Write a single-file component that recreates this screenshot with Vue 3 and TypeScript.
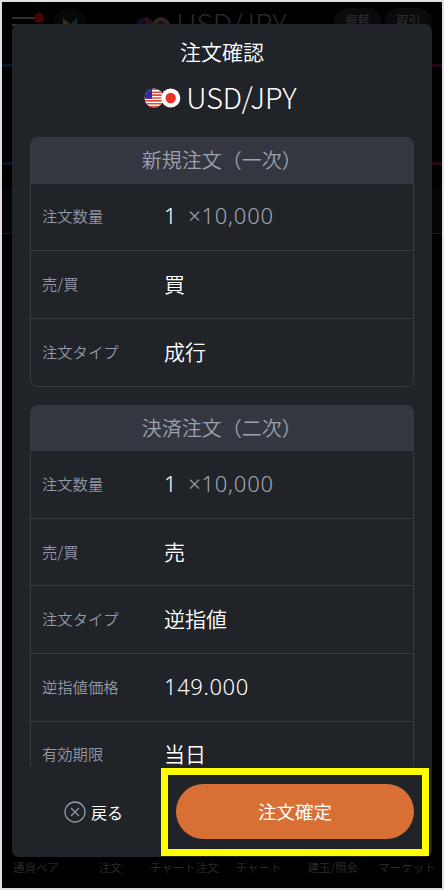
<script setup lang="ts">
interface Row {
  label: string
  value: string
  unit?: string
}
interface Section {
  title: string
  rows: Row[]
}

const sections: Section[] = [
  {
    title: '新規注文（一次）',
    rows: [
      { label: '注文数量', value: '1', unit: '×10,000' },
      { label: '売/買', value: '買' },
      { label: '注文タイプ', value: '成行' },
    ],
  },
  {
    title: '決済注文（二次）',
    rows: [
      { label: '注文数量', value: '1', unit: '×10,000' },
      { label: '売/買', value: '売' },
      { label: '注文タイプ', value: '逆指値' },
      { label: '逆指値価格', value: '149.000' },
      { label: '有効期限', value: '当日' },
    ],
  },
]
const tabs: string[] = ['通貨ペア', '注文', 'チャート注文', 'チャート', '建玉/照会', 'マーケット']
const isNumeric = (v: string): boolean => /^[\d.,]+$/.test(v)
</script>

<template>
  <div class="frame">
    <div class="screen">
      <header class="topbar">
        <div class="menu"><i></i><i></i><b></b></div>
        <div class="mascot">
          <svg width="18" height="18" viewBox="0 0 18 18">
            <path d="M2 1l7 6v9L2 12z" fill="#38330b" />
            <path d="M16 1l-7 6v9l7-5z" fill="#0c2e29" />
          </svg>
        </div>
        <div class="under-pair">
          <svg width="35" height="20" viewBox="0 0 35 20">
            <circle cx="9" cy="12" r="9" fill="#301013" />
            <path d="M0 12a9 9 0 0 1 9-9v9z" fill="#0d0c2b" />
            <circle cx="25" cy="12" r="9" fill="#272727" />
            <circle cx="25" cy="12" r="5" fill="#380909" />
          </svg>
          <span>USD/JPY</span>
        </div>
        <div class="pill">振替</div>
        <div class="pill">取引</div>
      </header>
      <div class="backdrop">
        <div class="rates upper"></div>
        <div class="rates lower"></div>
        <div class="panel"></div>
      </div>
      <nav class="tabs"><span v-for="t in tabs" :key="t">{{ t }}</span></nav>

      <section class="modal">
        <h1>注文確認</h1>
        <div class="pair">
          <svg class="flags" width="37" height="20" viewBox="0 0 37 20">
            <defs><clipPath id="us"><circle cx="10" cy="10" r="9.5" /></clipPath></defs>
            <g clip-path="url(#us)">
              <path fill="#fff" d="M0 0h20v20H0z" />
              <path stroke="#e9493c" stroke-width="1.6" d="M0 1.3h20M0 4.2h20M0 7.1h20M0 10h20M0 12.9h20M0 15.8h20M0 18.7h20" />
              <path fill="#302ba0" d="M0 0h8v10.7H0z" />
            </g>
            <circle cx="26.7" cy="10" r="9.6" fill="#fff" />
            <circle cx="26.7" cy="10" r="5.2" fill="#ec3323" />
          </svg>
          <span>USD/JPY</span>
        </div>
        <div class="scroll">
          <div v-for="s in sections" :key="s.title" class="card">
            <h2>{{ s.title }}</h2>
            <div v-for="r in s.rows" :key="r.label" class="row">
              <span class="label">{{ r.label }}</span>
              <span class="value" :class="{ num: isNumeric(r.value) }">{{ r.value }}</span>
              <span v-if="r.unit" class="unit">{{ r.unit }}</span>
            </div>
          </div>
        </div>
        <footer>
          <button class="back">
            <svg width="22" height="22" viewBox="0 0 22 22" fill="none" stroke="#9198a8">
              <circle cx="11" cy="11" r="10" stroke-width="1.3" />
              <path d="M7 7l8 8M15 7l-8 8" stroke-width="1.2" />
            </svg>
            戻る
          </button>
          <div class="highlight"><button class="confirm">注文確定</button></div>
        </footer>
      </section>
    </div>
  </div>
</template>

<style>
body { background: #e0e1e0; }
</style>
<style scoped>
* { box-sizing: border-box; }
.frame {
  width: 444px;
  height: 890px;
  padding: 2px;
  background: #e0e1e0;
  font-family: "Noto Sans CJK JP", sans-serif;
}
.screen {
  position: relative;
  width: 440px;
  height: 886px;
  background: #000;
  overflow: hidden;
  display: flex;
  flex-direction: column;
}
.topbar { display: flex; height: 62px; padding: 6px 10px 0; align-items: flex-start; }
.menu { position: relative; width: 42px; padding-top: 9px; }
.menu i { display: block; width: 23px; height: 2px; background: #303030; margin-bottom: 5px; }
.menu b { position: absolute; left: 22px; top: 5px; width: 10px; height: 10px; border-radius: 50%; background: #4a0404; }
.mascot { width: 34px; height: 34px; border-radius: 50%; background: #060707; padding: 8px; }
.under-pair { display: flex; margin-left: 49px; padding-top: 6px; width: 197px; }
.under-pair span { font-weight: 300; font-size: 28.7px; line-height: 18px; margin-left: 5px; color: #292929; }
.pill { position: relative; left: 4px; width: 47px; height: 28px; border-radius: 14px; background: #0a0b0c; color: #303235; font-size: 12px; line-height: 23px; text-align: center; margin-right: 4px; flex: none; }
.backdrop { flex: 1; }
.rates { height: 3px; background: linear-gradient(90deg, #051525 50%, #26051a 50%); }
.lower { margin-top: 95px; }
.panel { margin-top: 23px; height: 46px; border-bottom: 1px solid #1b1b1b; background: #050505; }
.tabs {
  height: 29px;
  margin: 0 -2px 0 -3px;
  display: grid;
  grid-template-columns: repeat(6, 1fr);
  text-align: center;
  color: #292929;
  font-size: 11.5px;
  line-height: 17px;
  white-space: nowrap;
}
.modal {
  position: absolute;
  left: 10px;
  top: 22px;
  width: 420px;
  height: 833px;
  border-radius: 7px;
  background: #202327;
  display: flex;
  flex-direction: column;
}
h1 { margin: 0; padding-top: 12px; height: 54px; line-height: 30px; font-size: 21px; font-weight: 350; color: #fff; text-align: center; }
.pair { height: 59px; display: flex; justify-content: center; align-items: flex-start; padding-top: 9px; gap: 5px; color: #fff; padding-right: 3px; }
.flags { margin-top: 1px; }
.pair span { font-size: 28.7px; line-height: 19px; font-weight: 300; }
.scroll { height: 630px; padding: 0 18px 0 17.5px; overflow: hidden; display: flex; flex-direction: column; gap: 18px; }
.card { flex: none; border: 1.5px solid #353941; border-radius: 7px; overflow: hidden; }
h2 { margin: 0; height: 44.6px; line-height: 44px; background: #353740; color: #9ca1af; font-size: 20px; font-weight: 350; text-align: center; }
.row { height: 67.65px; display: flex; align-items: center; padding: 0 0 3px 11.5px; border-top: 1px solid #353941; }
.label { width: 122px; font-size: 15.3px; color: #9398a6; font-weight: 350; }
.value { font-size: 21px; line-height: 30px; color: #fff; font-weight: 350; }
.num, .unit { font-family: "Noto Sans", "Noto Sans CJK JP", sans-serif; font-size: 22px; font-weight: 350; line-height: 30px; }
.num { letter-spacing: .6px; }
.unit { color: #a0a5b3; margin-left: 11px; letter-spacing: .75px; }
footer { height: 90px; padding-top: 1px; display: flex; }
button { border: 0; font-family: inherit; color: #fff; }
.back { width: 149px; height: 88px; padding: 0 0 0 52px; background: none; display: flex; align-items: center; gap: 5px; font-size: 16px; }
.highlight { width: 268px; height: 88px; border: 7px solid #ff0; padding: 9px 8px; display: flex; }
.confirm { flex: 1; height: 55px; border-radius: 28px; background: #d87035; font-size: 18.5px; font-weight: 400; padding: 0 0 1px; }
</style>
